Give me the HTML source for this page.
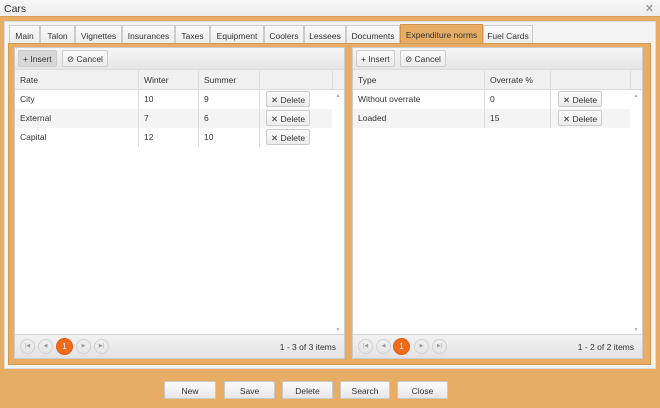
<!DOCTYPE html>
<html><head><style>
*{box-sizing:border-box;margin:0;padding:0}
body{width:660px;height:408px;background:#e8ad64;font-family:"Liberation Sans",sans-serif;font-size:8.5px;color:#333;position:relative;overflow:hidden}
.a{position:absolute}
.title{left:0;top:0;width:660px;height:17px;background:linear-gradient(#f8f8f8,#ececec);font-size:10.5px;color:#333;padding:3px 0 0 4px;border-bottom:1px solid #d9a05a}
.x{right:6px;top:2px;font-size:11px;color:#888}
.panel{left:4px;top:21px;width:652px;height:348px;background:#f3f3f3;border:1px solid #ddd}
.tab{top:25px;height:19px;background:linear-gradient(#fafafa,#ececec);border:1px solid #ccc;border-bottom:none;padding-top:5px;text-align:center;color:#333}
.tab.on{background:#e8ad64;border-color:#d49447;color:#333;top:24px;height:20px}
.content{left:8px;top:43px;width:643px;height:322px;background:#e8ad64;border:1px solid #d59a52}
.grid{background:#fff;border:1px solid #ccc}
.tb{background:linear-gradient(#f5f5f5,#e6e6e6);height:22px;border-bottom:1px solid #ddd}
.btn{position:absolute;height:17px;top:2px;border:1px solid #ccc;border-radius:2px;background:linear-gradient(#fbfbfb,#ececec);padding:3px 4px 0;color:#333;white-space:nowrap}
.hdr{position:absolute;top:22px;height:20px;background:#f0f0f0;border-bottom:1px solid #ddd;width:100%}
.c{position:absolute;height:100%;border-right:1px solid #ddd;padding:5px 5px 0}
.row .c{padding-top:4px}
.row{position:absolute;left:0;height:19px}
.row.alt{background:#f4f4f4}
.del{position:absolute;top:1px;height:16px;border:1px solid #ccc;border-radius:2px;background:linear-gradient(#fbfbfb,#ececec);padding:3px 4px 0;white-space:nowrap}
.pager{position:absolute;left:0;bottom:0;width:100%;height:24px;background:linear-gradient(#f2f2f2,#e3e3e3);border-top:1px solid #d5d5d5}
.pb{position:absolute;top:4px;width:15px;height:15px;border:1px solid #d0d0d0;border-radius:50%;font-size:5px;color:#999;text-align:center;line-height:13px}
.pb.on{background:#f06a1c;border-color:#e45c10;color:#fff;font-size:8px;width:17px;height:17px;top:3px;line-height:16px}
.sb{position:absolute;right:0;width:12px;background:#fff;font-size:5px;color:#aaa;text-align:center}
.fb{top:381px;height:18px;border:1px solid #c9c9c9;border-radius:2px;background:linear-gradient(#fdfdfd,#e6e6e6);text-align:center;padding-top:4px;color:#333}
</style></head><body>
<div class="a title">Cars</div><div class="a x">✕</div>
<div class="a panel"></div>
<div class="a tab" style="left:9px;width:31px">Main</div>
<div class="a tab" style="left:40px;width:35px">Talon</div>
<div class="a tab" style="left:75px;width:47px">Vignettes</div>
<div class="a tab" style="left:122px;width:53px">Insurances</div>
<div class="a tab" style="left:175px;width:35px">Taxes</div>
<div class="a tab" style="left:210px;width:54px">Equipment</div>
<div class="a tab" style="left:264px;width:40px">Coolers</div>
<div class="a tab" style="left:304px;width:42px">Lessees</div>
<div class="a tab" style="left:346px;width:54px">Documents</div>
<div class="a tab on" style="left:400px;width:83px">Expenditure norms</div>
<div class="a tab" style="left:483px;width:50px">Fuel Cards</div>
<div class="a content"></div>

<div class="a grid" style="left:14px;top:47px;width:331px;height:312px">
 <div class="tb"><div class="btn" style="left:3px;background:#d8d8d8">+ Insert</div><div class="btn" style="left:47px">⊘ Cancel</div></div>
 <div class="hdr"><div class="c" style="left:0;width:124px">Rate</div><div class="c" style="left:124px;width:60px">Winter</div><div class="c" style="left:184px;width:61px">Summer</div><div class="c" style="left:245px;width:73px"></div></div>
 <div class="row" style="top:42px;width:318px"><div class="c" style="left:0;width:124px">City</div><div class="c" style="left:124px;width:60px">10</div><div class="c" style="left:184px;width:61px">9</div><div class="del" style="left:251px">✕ Delete</div></div>
 <div class="row alt" style="top:61px;width:318px"><div class="c" style="left:0;width:124px">External</div><div class="c" style="left:124px;width:60px">7</div><div class="c" style="left:184px;width:61px">6</div><div class="del" style="left:251px">✕ Delete</div></div>
 <div class="row" style="top:80px;width:318px"><div class="c" style="left:0;width:124px">Capital</div><div class="c" style="left:124px;width:60px">12</div><div class="c" style="left:184px;width:61px">10</div><div class="del" style="left:251px">✕ Delete</div></div>
 <div class="sb" style="top:42px;height:245px"><div style="margin-top:3px">▲</div><div style="position:absolute;bottom:2px;width:100%">▼</div></div>
 <div class="pager"><div class="pb" style="left:5px">|◀</div><div class="pb" style="left:23px">◀</div><div class="pb on" style="left:41px">1</div><div class="pb" style="left:61px">▶</div><div class="pb" style="left:79px">▶|</div><div class="a" style="right:8px;top:7px">1 - 3 of 3 items</div></div>
</div>

<div class="a grid" style="left:352px;top:47px;width:291px;height:312px">
 <div class="tb"><div class="btn" style="left:3px">+ Insert</div><div class="btn" style="left:47px">⊘ Cancel</div></div>
 <div class="hdr"><div class="c" style="left:0;width:132px">Type</div><div class="c" style="left:132px;width:66px">Overrate %</div><div class="c" style="left:198px;width:80px"></div></div>
 <div class="row" style="top:42px;width:278px"><div class="c" style="left:0;width:132px">Without overrate</div><div class="c" style="left:132px;width:66px">0</div><div class="del" style="left:205px">✕ Delete</div></div>
 <div class="row alt" style="top:61px;width:278px"><div class="c" style="left:0;width:132px">Loaded</div><div class="c" style="left:132px;width:66px">15</div><div class="del" style="left:205px">✕ Delete</div></div>
 <div class="sb" style="top:42px;height:245px"><div style="margin-top:3px">▲</div><div style="position:absolute;bottom:2px;width:100%">▼</div></div>
 <div class="pager"><div class="pb" style="left:5px">|◀</div><div class="pb" style="left:23px">◀</div><div class="pb on" style="left:40px">1</div><div class="pb" style="left:61px">▶</div><div class="pb" style="left:79px">▶|</div><div class="a" style="right:8px;top:7px">1 - 2 of 2 items</div></div>
</div>

<div class="a fb" style="left:164px;width:52px">New</div>
<div class="a fb" style="left:224px;width:51px">Save</div>
<div class="a fb" style="left:282px;width:51px">Delete</div>
<div class="a fb" style="left:340px;width:50px">Search</div>
<div class="a fb" style="left:397px;width:51px">Close</div>
</body></html>
